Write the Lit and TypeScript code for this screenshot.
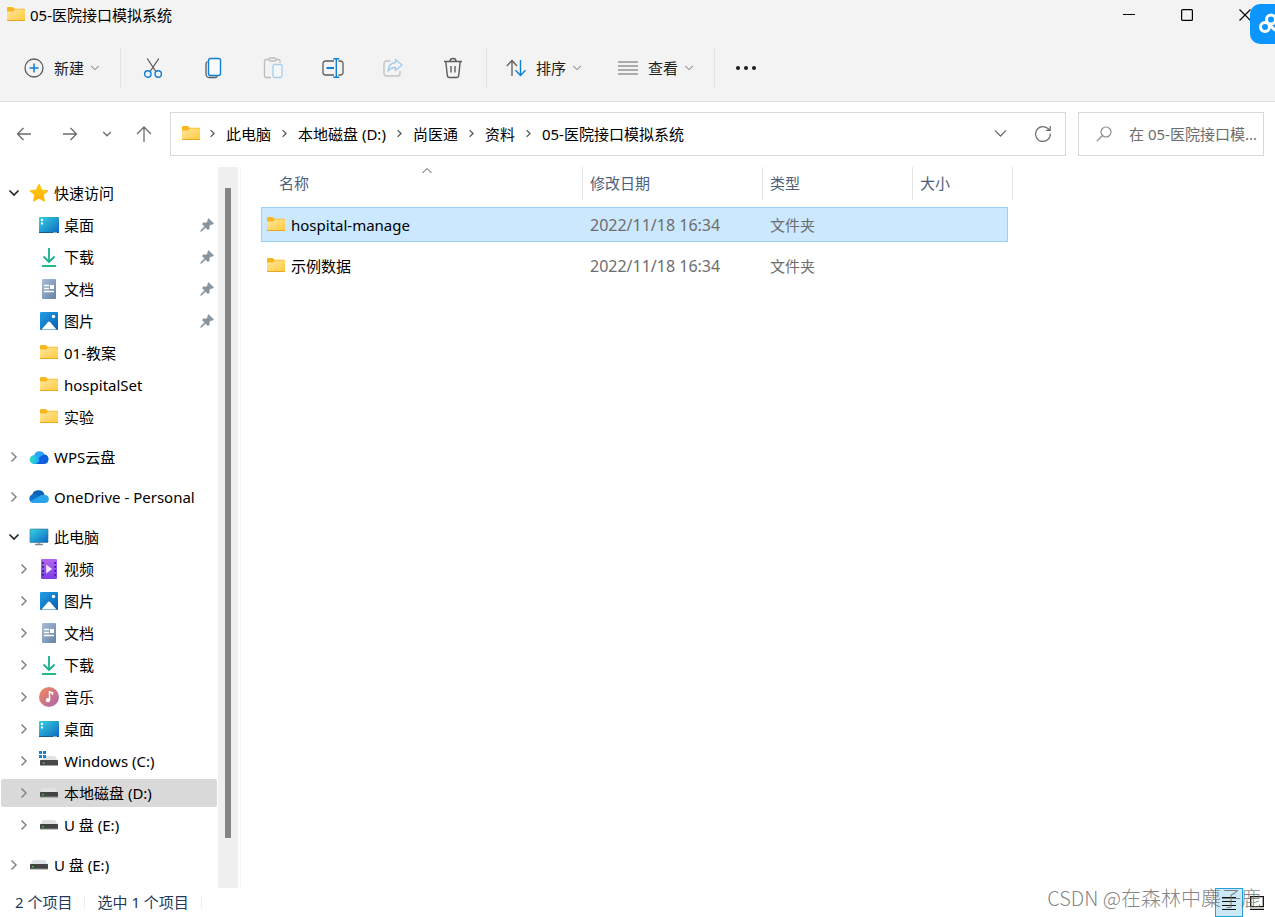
import { LitElement, html, css, svg, nothing, type TemplateResult } from "lit";
import { customElement, state } from "lit/decorators.js";
import { classMap } from "lit/directives/class-map.js";

const draw = (w: number, h: number, body: unknown) =>
  html`<svg width=${w} height=${h} viewBox="0 0 ${w} ${h}" fill="none" aria-hidden="true">${body}</svg>`;

const GREY = "#5c5c5c";
const BLUE = "#0f7fd6";

const chevron = (dir: "right" | "down" | "up", color: string, size: number, stroke = 1) => {
  const paths = { right: "M3.5 1.5 8 6 3.5 10.5", down: "M1.5 3.5 6 8 10.5 3.5", up: "M1.5 8 6 3.5 10.5 8" };
  return html`<svg width=${size} height=${size} viewBox="0 0 12 12" fill="none" aria-hidden="true">
    <path d=${paths[dir]} stroke=${color} stroke-width=${(stroke * 12) / size} />
  </svg>`;
};

const gradients = svg`
  <linearGradient id="gold" x1="0" y1="0" x2="1" y2="1"><stop offset="0" stop-color="#ffe79f"/><stop offset="1" stop-color="#ffc93c"/></linearGradient>
  <linearGradient id="screen" x1="0" y1="0" x2="1" y2="1"><stop offset="0" stop-color="#35d3e3"/><stop offset="1" stop-color="#0e66c0"/></linearGradient>
  <linearGradient id="photo" x1="0" y1="0" x2="1" y2="1"><stop offset="0" stop-color="#1f9fe6"/><stop offset="1" stop-color="#0b5cb0"/></linearGradient>
  <linearGradient id="paper" x1="0" y1="0" x2="1" y2="1"><stop offset="0" stop-color="#a9bfd9"/><stop offset="1" stop-color="#6482a5"/></linearGradient>
  <linearGradient id="film" x1="0" y1="0" x2="0" y2="1"><stop offset="0" stop-color="#b565f0"/><stop offset="1" stop-color="#7a3fe8"/></linearGradient>
  <linearGradient id="music" x1="0" y1="0" x2="1" y2="1"><stop offset="0" stop-color="#f78a52"/><stop offset="1" stop-color="#a864b8"/></linearGradient>
  <linearGradient id="wps" x1="0" y1="0" x2="1" y2="0"><stop offset="0" stop-color="#35e0c0"/><stop offset="1" stop-color="#1aa6ff"/></linearGradient>
  <linearGradient id="star" x1="0" y1="0" x2="0" y2="1"><stop offset="0" stop-color="#ffd500"/><stop offset="1" stop-color="#ffa812"/></linearGradient>`;

const defs = svg`<defs>${gradients}</defs>`;

const drive = svg`
  <path d="M4 5h12l3 4.500H1Z" fill="#dfe2e5"/>
  <rect x="1" y="9" width="18" height="5" rx="0.500" fill="#444"/>
  <rect x="1" y="13.500" width="18" height="1" fill="#888"/>
  <rect x="3" y="11" width="1.500" height="1.300" fill="#3be04a"/>`;

const icons: Record<string, () => TemplateResult> = {
  folder: () => draw(20, 20, svg`${defs}
    <path d="M1 3a1 1 0 0 1 1-1h4.600l2 1.800H18a1 1 0 0 1 1 1V8H1Z" fill="#f9b61f"/>
    <path d="M1 6.500h6.500L9 4.600h9a1 1 0 0 1 1 1V15a.7.7 0 0 1-.7.7H1.700A.7.7 0 0 1 1 15Z" fill="url(#gold)"/>
    <path d="M1 15.500h18" stroke="#eaa61e"/>`),
  star: () => draw(20, 20, svg`${defs}
    <path d="M10 1.200 12.700 7l6.200.8-4.600 4.200 1.200 6.300L10 15.200l-5.500 3.100L5.700 12 1.100 7.800 7.300 7Z" fill="url(#star)" stroke="#ffbe0a" stroke-linejoin="round"/>`),
  desktop: () => draw(20, 20, svg`${defs}
    <rect y="2" width="20" height="16" rx="1" fill="url(#screen)"/>
    <path d="M0 17.500h20" stroke="#145a8c"/>
    <path d="M2 4h2v2H2zM2 7.500h2v2H2z" fill="#fff"/><path d="M14.500 17.500h4" stroke="#fff" stroke-dasharray="1 1"/>`),
  download: () => draw(20, 20, svg`
    <path d="M10 1v14M4.500 9.500 10 15l5.500-5.500" stroke="#16b08f" stroke-width="1.800"/>
    <rect x="3" y="18" width="14" height="2" fill="#1fb886"/>`),
  document: () => draw(20, 20, svg`${defs}
    <rect x="3" width="14" height="20" rx="1" fill="url(#paper)"/>
    <path d="M5 6.500h5M5 9.500h5M5 12.500h10" stroke="#fff" stroke-width="1.300"/><rect x="11" y="6" width="4" height="4" fill="#fff"/>`),
  picture: () => draw(20, 20, svg`${defs}
    <rect x="1" y="1" width="18" height="18" rx="1" fill="url(#photo)"/>
    <path d="M2.500 18.500 9 11a1.300 1.300 0 0 1 2 0l6.500 7.500Z" fill="#fff"/><circle cx="14.500" cy="5.500" r="1.700" fill="#fff"/>`),
  video: () => draw(20, 20, svg`${defs}
    <rect x="2" width="16" height="20" rx="1" fill="url(#film)"/>
    <path d="M4 3v15M16.200 3v15" stroke="#3f1d83" stroke-width="1.800" stroke-dasharray="1.800 2.200"/>
    <path d="m7.200 5.500 6 4.500-6 4.500Z" fill="#f1e6fd"/>`),
  music: () => draw(20, 20, svg`${defs}
    <circle cx="10" cy="10" r="10" fill="url(#music)"/>
    <path d="M10.500 13.500V4.800l3 .9v2" stroke="#fff" stroke-width="1.500"/><circle cx="8.900" cy="13.200" r="2.100" fill="#fff"/>`),
  wps: () => draw(20, 20, svg`${defs}
    <path d="M5 9a5.500 5.500 0 0 1 10.500-1.500A4.800 4.800 0 0 1 15 17H5Z" fill="#2aa4fb"/>
    <path d="M8 13c2-2 4-4.700 7.500-5.500A4.800 4.800 0 0 1 15 17H6Z" fill="#0d5fdf"/>
    <path d="M5 8.200A4.400 4.400 0 0 0 5 17c3 0 4.300-1.500 5.500-3.500C9.500 10.500 8 8.200 5 8.200Z" fill="url(#wps)"/>`),
  onedrive: () => draw(20, 20, svg`
    <path d="M3 10A6.500 6.500 0 0 1 15.600 7.500L10 13Z" fill="#0b63b8"/>
    <path d="M4.500 16A4.400 4.400 0 0 1 5 7.200c2 0 3 .6 4.500 1.500L16 14Z" fill="#1071c8"/>
    <path d="M4.500 16a4.500 4.500 0 0 1-3.500-1.700L9.300 10a7 7 0 0 1 6.500-2 4 4 0 0 1 0 8Z" fill="#28a4ea"/>`),
  pc: () => draw(20, 20, svg`${defs}
    <rect x="1" y="2" width="18" height="13.500" rx="0.500" fill="url(#screen)" stroke="#37718f" stroke-width="0.600"/>
    <path d="M10 15.500v2M6 17.500h8" stroke="#7c8a94" stroke-width="1.300"/>`),
  drive: () => draw(20, 20, drive),
  winDrive: () => draw(20, 20, svg`
    <path d="M7 5h9l3 4.500H1Z" fill="#dfe2e5"/><rect x="1" y="9" width="18" height="5.500" rx="0.500" fill="#484848"/>
    <rect x="4" y="11.500" width="1.500" height="1.300" fill="#3be04a"/>
    <path d="M0 0h3v3H0zM4 0h3v3H4zM0 4h3v3H0zM4 4h3v3H4z" fill="#0f83d8"/>`),
  pin: () => draw(14, 14, svg`
    <path d="M8.600.4 13.800 5.400 12.200 6.400 10.600 6.600 9.200 8.500 9.500 10.300 8 12 5.600 9.600 1.700 13.200.6 13.500.9 12.300 4.500 8.400 2.200 6 3.800 4.500 5.800 4.900 7.600 3.500 7.700 1.800Z" fill="#8795a0" stroke="#8795a0" stroke-width="0.400"/>`),
  plus: () => draw(20, 20, svg`<circle cx="10" cy="10" r="9" stroke=${GREY} stroke-width="1.300"/><path d="M10 5.500v9M5.500 10h9" stroke=${BLUE} stroke-width="1.500"/>`),
  cut: () => draw(20, 20, svg`
    <path d="M4.200.5 13.200 14M15.800.5 6.800 14" stroke=${GREY} stroke-width="1.300"/>
    <circle cx="4.800" cy="16" r="3.200" stroke=${BLUE} stroke-width="1.400"/><circle cx="15.200" cy="16" r="3.200" stroke=${BLUE} stroke-width="1.400"/>`),
  copy: () => draw(20, 22, svg`
    <path d="M4.500 4.500A3 3 0 0 0 3 7v10a3.500 3.500 0 0 0 3.500 3.500h6a3 3 0 0 0 2-1.200" stroke=${GREY} stroke-width="1.300"/>
    <rect x="5.500" y="1.500" width="12" height="17" rx="2" fill="#f8fbfe" stroke=${BLUE} stroke-width="1.400"/>`),
  paste: () => draw(20, 22, svg`
    <path d="M8 20.500H3a1.500 1.500 0 0 1-1.500-1.500V4A1.500 1.500 0 0 1 3 2.500h3M13 2.500h2.500A1.500 1.500 0 0 1 17 4v2M6 2.500c0-1.300.6-1.500 1.500-1.500h4c1 0 1.500.3 1.500 1.500S12.500 4 11.500 4h-4C6.600 4 6 3.700 6 2.500Z" stroke="#bdbdbd" stroke-width="1.300"/>
    <rect x="10" y="7.500" width="9" height="13" rx="1.500" fill="#f3f7fa" stroke="#a6cdea" stroke-width="1.300"/>`),
  rename: () => draw(22, 20, svg`
    <path d="M12 17H3.500A2.500 2.500 0 0 1 1 14.500v-9A2.500 2.500 0 0 1 3.500 3H12M16.500 3h2A2.500 2.500 0 0 1 21 5.500v9a2.500 2.500 0 0 1-2.500 2.500h-2" stroke=${GREY} stroke-width="1.300"/>
    <path d="M14.300 1v18M11.300.7h6M11.300 19.300h6" stroke=${BLUE} stroke-width="1.400"/><path d="M4.500 10h7.500" stroke=${BLUE} stroke-width="2"/>`),
  share: () => draw(20, 20, svg`
    <path d="M7.500 3H3.500A2.500 2.500 0 0 0 1 5.500v10A2.500 2.500 0 0 0 3.500 18h11a2.500 2.500 0 0 0 2.500-2.500V13" stroke="#c3c3c3" stroke-width="1.400"/>
    <path d="M12.500 1.500 19 7l-6.500 5.500V9.500C9 9.300 7 10.500 5 13c.3-4.500 3-8 7.500-8.300Z" stroke="#9fcaec" stroke-width="1.300" stroke-linejoin="round"/>`),
  trash: () => draw(20, 22, svg`
    <path d="M1 4.500h18M7 4.200C7 2.200 8.200 1.500 10 1.500s3 .7 3 2.700M2.800 4.500l1.500 14a2.200 2.200 0 0 0 2.200 2h7a2.200 2.200 0 0 0 2.200-2l1.500-14M8 9v6.500M12 9v6.500" stroke=${GREY} stroke-width="1.400"/>`),
  sort: () => draw(20, 18, svg`
    <path d="M6 17V1.500M.8 7 6 1.500 11 7" stroke=${GREY} stroke-width="1.300"/>
    <path d="M14.500 1v15.500M9.500 11.200l5 5.300 5-5.300" stroke=${BLUE} stroke-width="1.400"/>`),
  lines: () => draw(20, 14, svg`<path d="M0 1h20M0 5h20M0 9h20M0 13h20" stroke="#666" stroke-width="1.200"/>`),
  dots: () => draw(22, 6, svg`<g fill="#1a1a1a"><circle cx="3" cy="3" r="2"/><circle cx="11" cy="3" r="2"/><circle cx="19" cy="3" r="2"/></g>`),
  back: () => draw(16, 16, svg`<path d="M15 8H1.500M7.500 2l-6 6 6 6" stroke="#6b6b6b" stroke-width="1.300"/>`),
  forward: () => draw(16, 16, svg`<path d="M1 8h13.500M8.500 2l6 6-6 6" stroke="#6b6b6b" stroke-width="1.300"/>`),
  up: () => draw(16, 16, svg`<path d="M8 16V1M1 8l7-7 7 7" stroke="#6b6b6b" stroke-width="1.300"/>`),
  refresh: () => draw(18, 18, svg`<path d="M16.300 8.500A7.400 7.400 0 1 1 13.600 3.300L15.800 5M16.200 1v4.300h-4.300" stroke="#6b6b6b" stroke-width="1.200"/>`),
  search: () => draw(16, 16, svg`<circle cx="10" cy="6" r="5" stroke="#8a8a8a" stroke-width="1.200"/><path d="M6.500 9.500.8 15.200" stroke="#8a8a8a" stroke-width="1.200"/>`),
  min: () => draw(12, 12, svg`<path d="M0 5.500h12" stroke="#000"/>`),
  max: () => draw(12, 12, svg`<rect x="0.600" y="0.600" width="10.800" height="10.800" rx="1" stroke="#000" stroke-width="1.200"/>`),
  close: () => draw(12, 12, svg`<path d="m.5.5 11 11M11.500.5l-11 11" stroke="#000" stroke-width="1.100"/>`),
  cloud: () => draw(25, 40, svg`<g stroke="#fff" stroke-width="3"><circle cx="15" cy="23" r="4.500"/><circle cx="21" cy="15.500" r="4.500"/><path d="m18.500 20 7 6.500"/></g>`),
  details: () => draw(14, 14, svg`<path d="M0 1.500h14M0 5.500h14M0 9.500h14M0 13.500h14" stroke="#111"/>`),
  thumbs: () => draw(14, 14, svg`<path d="M.7.700h12.600v10H.7ZM0 13.500h14" stroke="#111" stroke-width="1.300"/>`),
};

interface Node {
  icon: string;
  label: string;
  level?: 1 | 2;
  open?: boolean;
  leaf?: boolean;
  pinned?: boolean;
  selected?: boolean;
}

const TREE: Node[][] = [
  [
    { icon: "star", label: "快速访问", open: true },
    { icon: "desktop", label: "桌面", level: 2, leaf: true, pinned: true },
    { icon: "download", label: "下载", level: 2, leaf: true, pinned: true },
    { icon: "document", label: "文档", level: 2, leaf: true, pinned: true },
    { icon: "picture", label: "图片", level: 2, leaf: true, pinned: true },
    { icon: "folder", label: "01-教案", level: 2, leaf: true },
    { icon: "folder", label: "hospitalSet", level: 2, leaf: true },
    { icon: "folder", label: "实验", level: 2, leaf: true },
  ],
  [{ icon: "wps", label: "WPS云盘" }],
  [{ icon: "onedrive", label: "OneDrive - Personal" }],
  [
    { icon: "pc", label: "此电脑", open: true },
    { icon: "video", label: "视频", level: 2 },
    { icon: "picture", label: "图片", level: 2 },
    { icon: "document", label: "文档", level: 2 },
    { icon: "download", label: "下载", level: 2 },
    { icon: "music", label: "音乐", level: 2 },
    { icon: "desktop", label: "桌面", level: 2 },
    { icon: "winDrive", label: "Windows (C:)", level: 2 },
    { icon: "drive", label: "本地磁盘 (D:)", level: 2, selected: true },
    { icon: "drive", label: "U 盘 (E:)", level: 2 },
  ],
  [{ icon: "drive", label: "U 盘 (E:)" }],
];

const base = css`
  :host { font: 15px/20px "Noto Sans", "Noto Sans CJK SC", sans-serif; color: #000; }
  * { box-sizing: border-box; }
  svg { display: block; flex: none; }
  button { font: inherit; color: inherit; background: none; border: 0; padding: 0; margin: 0;
    display: flex; align-items: center; justify-content: center; white-space: nowrap; }
  a { color: inherit; text-decoration: none; white-space: nowrap; }
`;

@customElement("title-bar")
export class TitleBar extends LitElement {
  static styles = [base, css`
    :host { display: flex; align-items: center; height: 32px; background: #f3f3f3; padding: 0 1px 2px 6px; }
    .title { flex: 1; margin: 0 0 0 4px; font-size: 15px; font-weight: 400; }
    .control { width: 58px; height: 30px; }
  `];
  render() {
    return html`${icons.folder()}
      <h1 class="title">05-医院接口模拟系统</h1>
      <button class="control" aria-label="最小化">${icons.min()}</button>
      <button class="control" aria-label="最大化">${icons.max()}</button>
      <button class="control" aria-label="关闭">${icons.close()}</button>`;
  }
}

@customElement("command-bar")
export class CommandBar extends LitElement {
  static styles = [base, css`
    :host { display: flex; align-items: center; box-sizing: border-box; height: 70px; padding: 2px 0 0 24px; background: #f3f3f3;
      border-bottom: 1px solid #dedede; color: #1f1f1f; }
    .menu { height: 40px; gap: 10px; }
    .menu svg:last-child { margin-left: -4px; }
    .tool { width: 60px; height: 40px; }
    .rule { width: 1px; height: 40px; background: #e2e2e2; margin: 0 2px 0 20px; }
    .rule.tight { margin: 0 19px 0 3px; }
    .view { margin-left: 36px; }
    .more { margin-left: 18px; height: 40px; }
  `];
  render() {
    const tools: [string, string][] = [["cut", "剪切"], ["copy", "复制"], ["paste", "粘贴"], ["rename", "重命名"], ["share", "共享"], ["trash", "删除"]];
    const arrow = chevron("down", "#6b6b6b", 10, 1);
    return html`
      <button class="menu">${icons.plus()}<span>新建</span>${arrow}</button>
      <div class="rule"></div>
      ${tools.map(([icon, label]) => html`<button class="tool" aria-label=${label}>${icons[icon]()}</button>`)}
      <div class="rule tight"></div>
      <button class="menu">${icons.sort()}<span>排序</span>${arrow}</button>
      <button class="menu view">${icons.lines()}<span>查看</span>${arrow}</button>
      <div class="rule"></div>
      <button class="more" aria-label="更多">${icons.dots()}</button>`;
  }
}

@customElement("address-row")
export class AddressRow extends LitElement {
  static styles = [base, css`
    :host { display: flex; align-items: center; box-sizing: border-box; height: 65px; padding: 0 11px 2px 16px; }
    .nav { display: flex; align-items: center; margin-right: 18px; }
    .nav button { height: 32px; width: 16px; }
    .nav .forward { margin-left: 30px; }
    .nav .recent { margin-left: 17px; width: 24px; }
    .nav .parent { margin-left: 17px; }
    .path { flex: 1; min-width: 0; height: 44px; border: 1px solid #d9d9d9; display: flex; align-items: center; padding: 0 13px 0 10px; }
    .crumbs { flex: 1; min-width: 0; overflow: hidden; display: flex; align-items: center; list-style: none; margin: 0; padding: 0; }
    .crumbs li { display: flex; align-items: center; }
    .crumbs li svg { margin: 0 9px; }
    .crumbs li:first-child svg { margin: 0 9px 0 7px; }
    .history { width: 14px; margin-right: 27px; }
    .search { width: 186px; height: 44px; margin-left: 12px; border: 1px solid #d9d9d9; display: flex; align-items: center; gap: 17px; padding-left: 17px; }
    input { flex: 1; min-width: 0; border: 0; padding: 0; outline: 0; background: none; font: inherit; }
    input::placeholder { color: #6d6d6d; opacity: 1; }
  `];
  render() {
    const crumbs = ["此电脑", "本地磁盘 (D:)", "尚医通", "资料", "05-医院接口模拟系统"];
    return html`
      <div class="nav">
        <button aria-label="后退">${icons.back()}</button>
        <button class="forward" aria-label="前进">${icons.forward()}</button>
        <button class="recent" aria-label="最近浏览的位置">${chevron("down", "#6b6b6b", 10, 1.4)}</button>
        <button class="parent" aria-label="上移">${icons.up()}</button>
      </div>
      <div class="path">
        ${icons.folder()}
        <ol class="crumbs">
          ${crumbs.map((c) => html`<li>${chevron("right", "#5c5c5c", 9, 1.4)}<a href="#">${c}</a></li>`)}
        </ol>
        <button class="history" aria-label="以前的位置">${chevron("down", "#6b6b6b", 15, 1.3)}</button>
        <button aria-label="刷新">${icons.refresh()}</button>
      </div>
      <label class="search">${icons.search()}<input type="text" aria-label="搜索" placeholder="在 05-医院接口模..." /></label>`;
  }
}

@customElement("nav-tree")
export class NavTree extends LitElement {
  static styles = [base, css`
    :host { display: flex; box-sizing: border-box; width: 241px; border-right: 1px solid #f5f5f5; }
    .tree { flex: 1; display: flex; flex-direction: column; gap: 8px; padding: 10px 1px 7px 1px; }
    .group { display: flex; flex-direction: column; gap: 4px; padding: 2px 0; }
    .item { display: flex; align-items: center; height: 28px; padding: 0 3px 0 6px; border-radius: 2px; }
    .item.nested { padding-left: 16px; }
    .item.selected { background: #d9d9d9; }
    .toggle { width: 14px; height: 20px; margin-right: 8px; }
    .label { flex: 1; margin-left: 5px; }
    .track { width: 20px; margin-right: 2px; background: #f0f0f0; display: flex; justify-content: center; padding: 21px 0 50px; }
    .thumb { width: 6px; background: #858585; }
  `];
  render() {
    return html`
      <nav class="tree">
        ${TREE.map((group) => html`<div class="group">${group.map((n) => this.item(n))}</div>`)}
      </nav>
      <div class="track"><div class="thumb"></div></div>`;
  }
  private item(n: Node) {
    const arrow = n.leaf ? nothing : n.open ? chevron("down", "#222", 12, 1.6) : chevron("right", "#858585", 12, 1.5);
    return html`<div class=${classMap({ item: true, nested: n.level === 2, selected: !!n.selected })}>
      ${n.leaf ? html`<span class="toggle"></span>` : html`<button class="toggle" aria-label=${n.label}>${arrow}</button>`}
      ${icons[n.icon]()}
      <a href="#" class="label">${n.label}</a>
      ${n.pinned ? icons.pin() : nothing}
    </div>`;
  }
}

@customElement("file-list")
export class FileList extends LitElement {
  static styles = [base, css`
    :host { display: block; flex: 1; min-width: 0; padding-left: 20px; }
    table, thead, tbody { display: block; }
    tr { display: grid; grid-template-columns: 322px 180px 150px 1fr; align-items: center; }
    thead { width: 752px; margin-bottom: 7px; }
    th { position: relative; height: 33px; padding: 6px 0 0 7px; border-right: 1px solid #e5e5e5; text-align: left; font-weight: 400; color: #4c607a; }
    th:first-child { padding-left: 18px; }
    .asc { position: absolute; top: -2px; left: 160px; }
    tbody tr { width: 747px; height: 35px; margin-bottom: 6px; border: 1px solid transparent; }
    tbody tr.selected { background: #cce8ff; border-color: #99d1ff; }
    td { padding: 0 0 0 6px; color: #6d6d6d; }
    .name { display: flex; align-items: center; gap: 5px; padding-left: 4px; color: #000; }
    .date { font-size: 16px; }
  `];
  @state() private selected = 0;
  render() {
    const files = ["hospital-manage", "示例数据"];
    return html`<table>
      <thead><tr>
        <th scope="col">名称<span class="asc">${chevron("up", "#555", 12, 1)}</span></th>
        <th scope="col">修改日期</th><th scope="col">类型</th><th scope="col">大小</th>
      </tr></thead>
      <tbody>
        ${files.map((f, i) => html`<tr class=${classMap({ selected: i === this.selected })} @click=${() => (this.selected = i)}>
          <td class="name">${icons.folder()}<span>${f}</span></td>
          <td class="date">2022/11/18 16:34</td><td>文件夹</td><td></td>
        </tr>`)}
      </tbody>
    </table>`;
  }
}

@customElement("status-bar")
export class StatusBar extends LitElement {
  static styles = [base, css`
    :host { display: flex; align-items: center; height: 29px; padding: 0 4px 0 15px; color: #1e395b; }
    .part { padding-right: 12px; margin: 0 12px 2px 0; border-right: 1px solid #f0f0f0; line-height: 14px; white-space: nowrap; }
    .views { margin-left: auto; display: flex; align-items: center; }
    .views button { width: 28px; height: 29px; border: 1px solid transparent; }
    .views .active { border-color: #26a0da; background: #cbe8f6; }
  `];
  render() {
    return html`<span class="part">2 个项目</span><span class="part">选中 1 个项目</span>
      <div class="views">
        <button class="active" aria-label="详细信息">${icons.details()}</button>
        <button aria-label="大缩略图">${icons.thumbs()}</button>
      </div>`;
  }
}

@customElement("app-root")
export class AppRoot extends LitElement {
  static styles = [base, css`
    :host { position: relative; display: flex; flex-direction: column; min-height: 100vh; background: #fff; overflow: hidden; }
    .body { flex: 1; display: flex; }
    .float { position: absolute; top: 4px; right: 0; width: 25px; height: 40px; border-radius: 10px 0 0 10px; background: #0c95ff; }
    .mark { position: absolute; right: 14px; bottom: 5px; font: 300 20px/28px "Noto Sans CJK SC", sans-serif;
      color: rgba(100, 100, 100, 0.8); pointer-events: none; white-space: nowrap; }
  `];
  render() {
    return html`
      <title-bar></title-bar>
      <command-bar></command-bar>
      <address-row></address-row>
      <div class="body"><nav-tree></nav-tree><file-list></file-list></div>
      <status-bar></status-bar>
      <button class="float" aria-label="云盘">${icons.cloud()}</button>
      <div class="mark">CSDN @在森林中麋子鹿</div>`;
  }
}
